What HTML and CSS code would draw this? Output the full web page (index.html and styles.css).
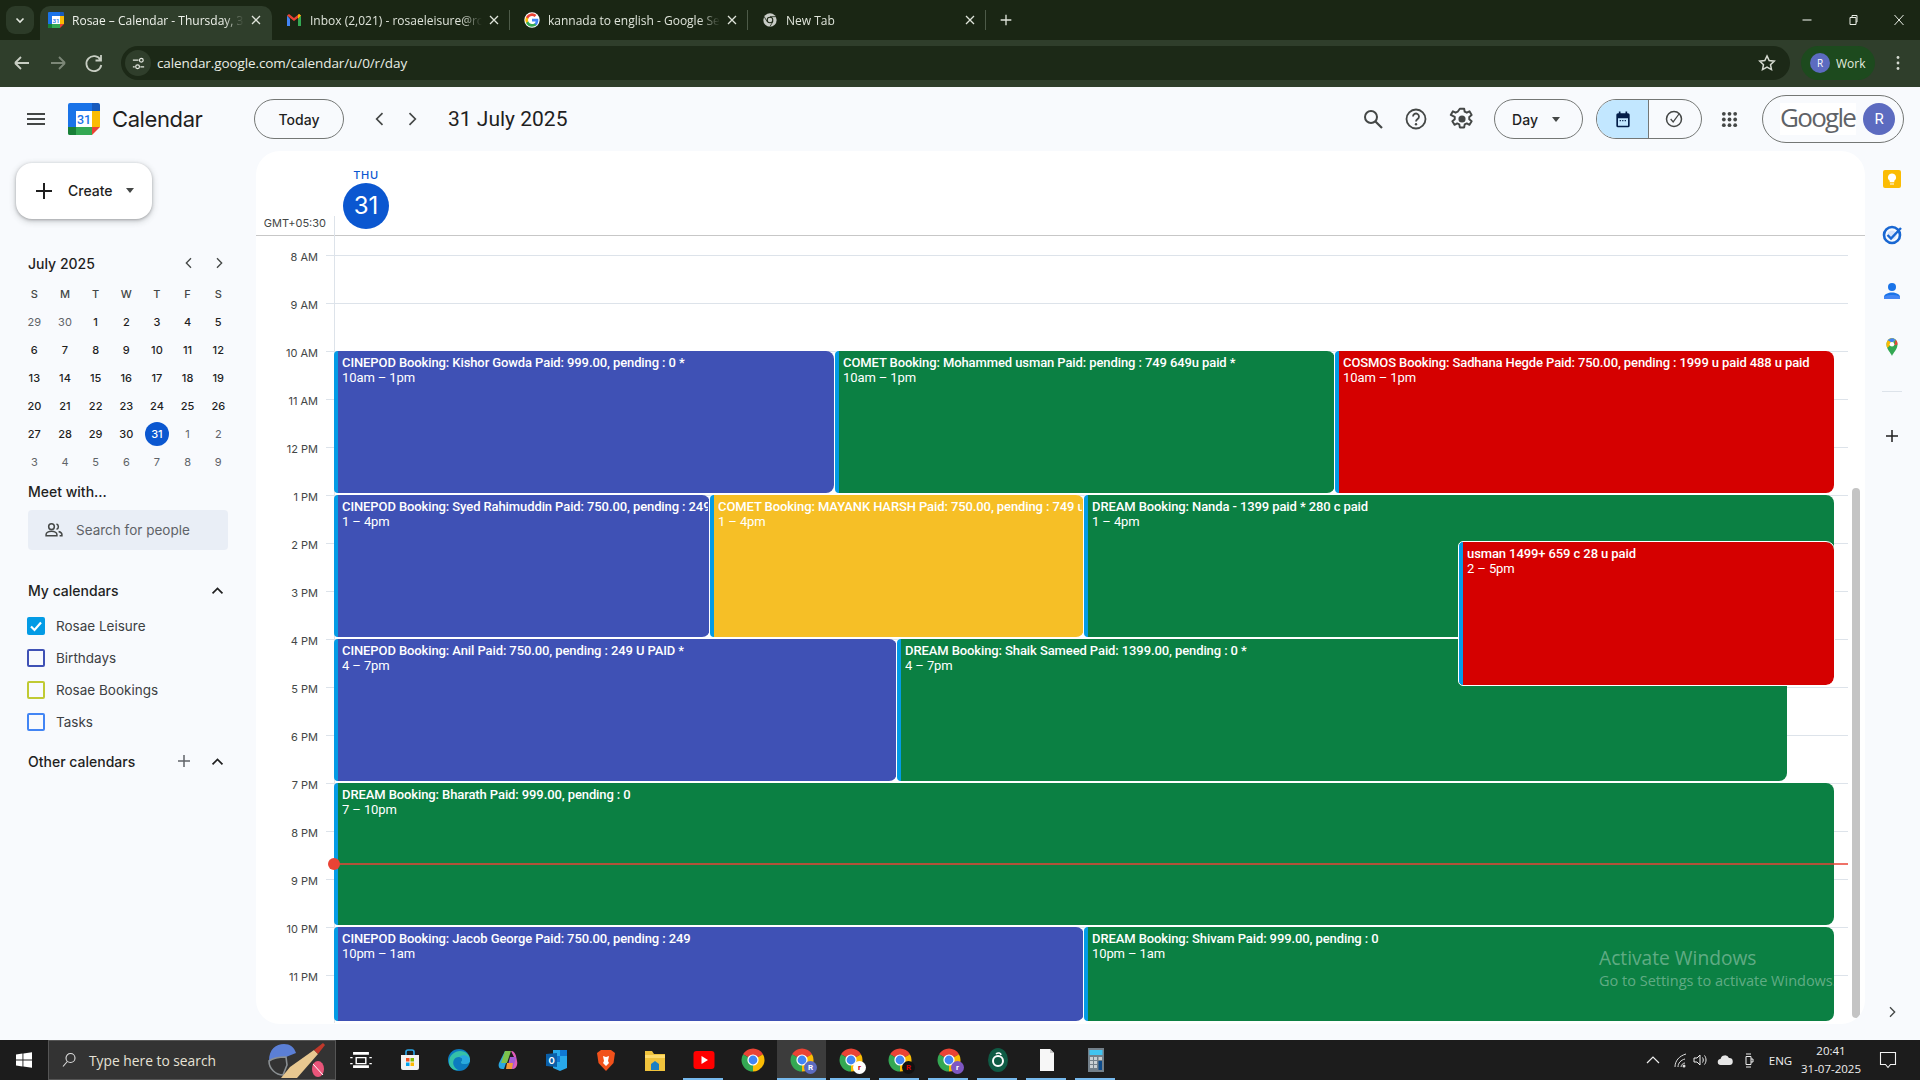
FILE: index.html
```html
<!DOCTYPE html>
<html lang="en">
<head>
<meta charset="utf-8">
<title>Rosae – Calendar</title>
<link rel="stylesheet" href="styles.css">
</head>
<body>
<svg class="defs" width="0" height="0" aria-hidden="true">
  <symbol id="chrome" viewBox="0 0 24 24">
    <circle cx="12" cy="12" r="8" fill="none" stroke="#ea4335" stroke-width="7" stroke-dasharray="16.76 33.52" transform="rotate(-150 12 12)"/>
    <circle cx="12" cy="12" r="8" fill="none" stroke="#fbbc04" stroke-width="7" stroke-dasharray="16.76 33.52" transform="rotate(-30 12 12)"/>
    <circle cx="12" cy="12" r="8" fill="none" stroke="#34a853" stroke-width="7" stroke-dasharray="16.76 33.52" transform="rotate(90 12 12)"/>
    <circle cx="12" cy="12" r="5.6" fill="#fff"/><circle cx="12" cy="12" r="4.4" fill="#4285f4"/>
  </symbol>
  <symbol id="gcal" viewBox="0 0 32 32">
    <path d="M2 0h22v8H8v16H0V2a2 2 0 0 1 2-2z" fill="#1a73e8"/>
    <path d="M24 0h6a2 2 0 0 1 2 2v6h-8z" fill="#185abc"/>
    <path d="M24 8h8v16h-8z" fill="#fbbc04"/>
    <path d="M0 24h24v8H2a2 2 0 0 1-2-2z" fill="#34a853"/>
    <path d="M0 24h8v8H2a2 2 0 0 1-2-2z" fill="#188038"/>
    <path d="M24 24h8l-8 8z" fill="#ea4335"/>
    <path d="M8 8h16v16H8z" fill="#fff"/>
    <text x="16" y="21" text-anchor="middle" font-family="Roboto, sans-serif" font-size="12.5" font-weight="500" fill="#1a73e8">31</text>
  </symbol>
  <symbol id="back" viewBox="0 0 24 24"><path d="M5 12h14M5 12l6-6M5 12l6 6" fill="none" stroke="#c8cec3" stroke-width="1.800"/></symbol>
  <symbol id="chev-l" viewBox="0 0 24 24"><path d="M15 5l-7 7 7 7" fill="none" stroke="currentColor" stroke-width="2"/></symbol>
  <symbol id="chev-r" viewBox="0 0 24 24"><path d="M9 5l7 7-7 7" fill="none" stroke="currentColor" stroke-width="2"/></symbol>
  <symbol id="chev-u" viewBox="0 0 24 24"><path d="M5 16l7-7 7 7" fill="none" stroke="currentColor" stroke-width="2.4"/></symbol>
  <symbol id="plus" viewBox="0 0 24 24"><path d="M12 4v16M4 12h16" fill="none" stroke="currentColor" stroke-width="2"/></symbol>
  <symbol id="x" viewBox="0 0 12 12"><path d="M2 2l8 8M10 2l-8 8" fill="none" stroke="currentColor" stroke-width="1.3"/></symbol>
</svg>

<header class="tabstrip">
  <div class="tab-search"><svg class="i10" viewBox="0 0 12 12"><path d="M2.5 4.5L6 8l3.5-3.5" fill="none" stroke="#e3e8df" stroke-width="1.6"/></svg></div>
  <div class="tab tab-active">
    <svg class="favicon"><use href="#gcal"/></svg><span class="tab-title">Rosae – Calendar - Thursday, 31 July 2025</span><svg class="tab-x"><use href="#x"/></svg>
  </div>
  <div class="tab">
    <svg class="favicon" viewBox="0 0 16 16"><path d="M1 3.5V14h3V7z" fill="#4285f4"/><path d="M15 3.5V14h-3V7z" fill="#34a853"/><path d="M1 3.5L8 9l7-5.5L13 2 8 6 3 2z" fill="#ea4335"/><path d="M12 7l3-3.500L13 2l-1 1z" fill="#fbbc04"/></svg><span class="tab-title">Inbox (2,021) - rosaeleisure@rosae.com</span><svg class="tab-x"><use href="#x"/></svg>
  </div>
  <i class="tab-sep"></i>
  <div class="tab">
    <svg class="favicon" viewBox="0 0 48 48"><circle cx="24" cy="24" r="23" fill="#fff"/><path d="M43 24.500c0-1.400-.1-2.700-.4-4H24v7.800h10.900a9.300 9.300 0 0 1-4 6.100v5h6.500c3.500-3.400 5.600-8.500 5.600-14.900z" fill="#4285f4"/><path d="M24 44c5.400 0 10-1.800 13.400-4.800l-6.500-5c-1.800 1.200-4.100 1.900-6.900 1.900-5.300 0-9.800-3.600-11.400-8.400H6v5.200A20 20 0 0 0 24 44z" fill="#34a853"/><path d="M12.600 27.700a12 12 0 0 1 0-7.400v-5.200H6a20 20 0 0 0 0 17.800z" fill="#fbbc04"/><path d="M24 11.900c3 0 5.600 1 7.700 3l5.800-5.800A20 20 0 0 0 6 15.100l6.600 5.200c1.600-4.800 6.100-8.400 11.400-8.400z" fill="#ea4335"/></svg><span class="tab-title">kannada to english - Google Search</span><svg class="tab-x"><use href="#x"/></svg>
  </div>
  <i class="tab-sep"></i>
  <div class="tab">
    <svg class="favicon" viewBox="0 0 24 24"><circle cx="12" cy="12" r="10" fill="#c8ccc6"/><circle cx="12" cy="12" r="5" fill="#1a2614"/><circle cx="12" cy="12" r="3.400" fill="#c8ccc6"/><path d="M12 7h9M7.700 14.500L3.300 7M16.300 14.500L11.800 22" stroke="#1a2614" stroke-width="1.200"/></svg><span class="tab-title">New Tab</span><svg class="tab-x"><use href="#x"/></svg>
  </div>
  <i class="tab-sep"></i>
  <svg class="new-tab"><use href="#plus"/></svg>
  <div class="win-controls">
    <svg viewBox="0 0 12 12"><path d="M1.500 6h9" stroke="#e8ece4" stroke-width="1.100"/></svg>
    <svg viewBox="0 0 12 12"><path d="M3 3.500h6v7H3zM5 3.500V1.500h5v6.500H9" fill="none" stroke="#e8ece4"/></svg>
    <svg viewBox="0 0 12 12"><path d="M1.500 1l9 10M10.500 1l-9 10" stroke="#e8ece4" stroke-width="1"/></svg>
  </div>
</header>

<nav class="toolbar">
  <svg class="tb-icon"><use href="#back"/></svg>
  <svg class="tb-icon" viewBox="0 0 24 24"><path d="M19 12H5M19 12l-6-6M19 12l-6 6" fill="none" stroke="#7c8777" stroke-width="1.800"/></svg>
  <svg class="tb-icon" viewBox="0 0 24 24"><path d="M18.500 9a7.500 7.500 0 1 0 .8 5M19 4v5.500h-5.500" fill="none" stroke="#c8cec3" stroke-width="1.800"/></svg>
  <div class="omnibox">
    <span class="tune"><svg viewBox="0 0 16 16"><path d="M2 4.500h6M2 11.500h2M10 11.500h4" stroke="#e5e9e1" stroke-width="1.300"/><circle cx="11" cy="4.500" r="2" fill="none" stroke="#e5e9e1" stroke-width="1.300"/><circle cx="7" cy="11.500" r="2" fill="none" stroke="#e5e9e1" stroke-width="1.300"/></svg></span>
    <span class="url">calendar.google.com/calendar/u/0/r/day</span>
    <svg class="star" viewBox="0 0 24 24"><path d="M12 3.500l2.600 5.600 6.100.7-4.500 4.200 1.200 6L12 17l-5.400 3 1.200-6-4.500-4.200 6.100-.7z" fill="none" stroke="#d5dad0" stroke-width="1.800"/></svg>
  </div>
  <div class="profile"><span class="profile-av">R</span><span>Work</span></div>
  <svg class="kebab" viewBox="0 0 4 16"><circle cx="2" cy="2.500" r="1.400" fill="#d5dad0"/><circle cx="2" cy="8" r="1.400" fill="#d5dad0"/><circle cx="2" cy="13.500" r="1.400" fill="#d5dad0"/></svg>
</nav>

<div class="app">
  <div class="topbar">
    <div class="brand">
      <svg class="burger" viewBox="0 0 18 12"><path d="M0 1h18M0 6h18M0 11h18" stroke="#444746" stroke-width="2"/></svg>
      <svg class="logo"><use href="#gcal"/></svg>
      <span class="brand-name">Calendar</span>
    </div>
    <button class="pill today">Today</button>
    <svg class="nav-chev"><use href="#chev-l"/></svg>
    <svg class="nav-chev"><use href="#chev-r"/></svg>
    <h1 class="date-title">31 July 2025</h1>
    <div class="top-right">
      <svg class="top-icon" viewBox="0 0 24 24"><circle cx="10" cy="10" r="6" fill="none" stroke="#444746" stroke-width="2"/><path d="M14.500 14.500L21 21" stroke="#444746" stroke-width="2.200"/></svg>
      <svg class="top-icon ti-help" viewBox="0 0 24 24"><circle cx="12" cy="12" r="9.500" fill="none" stroke="#444746" stroke-width="1.800"/><path d="M9 9.500a3 3 0 1 1 4.500 2.600c-1 .6-1.500 1.100-1.500 2.400" fill="none" stroke="#444746" stroke-width="1.800"/><circle cx="12" cy="17.300" r="1.200" fill="#444746"/></svg>
      <svg class="top-icon ti-gear" viewBox="0 0 24 24"><path d="M10 2.500h4l.5 2.800 1.900.9 2.500-1.300 2 3.400-2.200 1.800v2.100l2.200 1.800-2 3.400-2.500-1.300-1.900.9-.5 2.800h-4l-.5-2.800-1.900-.9-2.500 1.300-2-3.400 2.200-1.800v-2.100L1.600 8.300l2-3.400 2.500 1.300 1.900-.9z" fill="none" stroke="#444746" stroke-width="1.800" stroke-linejoin="round"/><circle cx="12" cy="12" r="3.300" fill="#444746"/></svg>
      <button class="pill day-btn">Day<i class="caret"></i></button>
      <div class="toggle">
        <span class="toggle-on"><svg viewBox="0 0 24 24"><path d="M6 6h12a1 1 0 0 1 1 1v13a1 1 0 0 1-1 1H6a1 1 0 0 1-1-1V7a1 1 0 0 1 1-1z" fill="none" stroke="#041e49" stroke-width="2"/><path d="M5 6h14v5H5z" fill="#041e49"/><path d="M8 3v3M16 3v3" stroke="#041e49" stroke-width="2"/><path d="M8 14h8" stroke="#041e49" stroke-width="1.500" stroke-dasharray="1.500 1.500"/></svg></span>
        <span class="toggle-off"><svg viewBox="0 0 24 24"><circle cx="12" cy="12" r="9" fill="none" stroke="#444746" stroke-width="1.800"/><path d="M8 12l3 3.500 7-9.500" fill="none" stroke="#444746" stroke-width="1.500"/></svg></span>
      </div>
      <svg class="apps" viewBox="0 0 18 18"><g fill="#444746"><circle cx="3" cy="3" r="2"/><circle cx="9" cy="3" r="2"/><circle cx="15" cy="3" r="2"/><circle cx="3" cy="9" r="2"/><circle cx="9" cy="9" r="2"/><circle cx="15" cy="9" r="2"/><circle cx="3" cy="15" r="2"/><circle cx="9" cy="15" r="2"/><circle cx="15" cy="15" r="2"/></g></svg>
      <div class="account"><span class="wordmark">Google</span><span class="account-av">R</span></div>
    </div>
  </div>

  <div class="main">
    <aside class="sidebar">
      <button class="create"><svg class="create-plus"><use href="#plus"/></svg><span>Create</span><i class="caret"></i></button>
      <div class="mini-head"><span>July 2025</span><svg class="mini-chev"><use href="#chev-l"/></svg><svg class="mini-chev"><use href="#chev-r"/></svg></div>
      <div class="mini-grid">
        <b>S</b><b>M</b><b>T</b><b>W</b><b>T</b><b>F</b><b>S</b>
        <span class="dim">29</span><span class="dim">30</span><span>1</span><span>2</span><span>3</span><span>4</span><span>5</span>
        <span>6</span><span>7</span><span>8</span><span>9</span><span>10</span><span>11</span><span>12</span>
        <span>13</span><span>14</span><span>15</span><span>16</span><span>17</span><span>18</span><span>19</span>
        <span>20</span><span>21</span><span>22</span><span>23</span><span>24</span><span>25</span><span>26</span>
        <span>27</span><span>28</span><span>29</span><span>30</span><span class="now">31</span><span class="dim">1</span><span class="dim">2</span>
        <span class="dim">3</span><span class="dim">4</span><span class="dim">5</span><span class="dim">6</span><span class="dim">7</span><span class="dim">8</span><span class="dim">9</span>
      </div>
      <h2 class="meet">Meet with...</h2>
      <div class="people">
        <svg viewBox="0 0 24 24"><circle cx="9" cy="8" r="3.400" fill="none" stroke="#444746" stroke-width="1.800"/><path d="M2.500 19v-1.500c0-2.500 3.500-4 6.500-4s6.500 1.500 6.500 4V19z" fill="none" stroke="#444746" stroke-width="1.800"/><path d="M15 4.800a3.400 3.400 0 0 1 0 6.400M17.500 13.800c2.300.6 4 1.900 4 3.700V19h-2.800" fill="none" stroke="#444746" stroke-width="1.800"/></svg>
        <span>Search for people</span>
      </div>
      <div class="section-head sh-my"><span>My calendars</span><svg class="sec-chev"><use href="#chev-u"/></svg></div>
      <ul class="cal-list">
        <li><i class="check check-on"><svg viewBox="0 0 18 18"><path d="M4 9.500l3.500 3.500L14 5.500" fill="none" stroke="#fff" stroke-width="2.200"/></svg></i>Rosae Leisure</li>
        <li><i class="check c-indigo"></i>Birthdays</li>
        <li><i class="check c-olive"></i>Rosae Bookings</li>
        <li><i class="check c-blue"></i>Tasks</li>
      </ul>
      <div class="section-head sh-other"><span>Other calendars</span><svg class="sec-plus"><use href="#plus"/></svg><svg class="sec-chev"><use href="#chev-u"/></svg></div>
    </aside>

    <section class="panel">
      <div class="day-head">
        <div class="gmt">GMT+05:30</div>
        <div class="day-cell"><span class="dow">THU</span><span class="dom">31</span></div>
      </div>
      <div class="grid">
        <div class="hour"><span>8 AM</span><i></i></div>
        <div class="hour"><span>9 AM</span><i></i></div>
        <div class="hour"><span>10 AM</span><i></i></div>
        <div class="hour"><span>11 AM</span><i></i></div>
        <div class="hour"><span>12 PM</span><i></i></div>
        <div class="hour"><span>1 PM</span><i></i></div>
        <div class="hour"><span>2 PM</span><i></i></div>
        <div class="hour"><span>3 PM</span><i></i></div>
        <div class="hour"><span>4 PM</span><i></i></div>
        <div class="hour"><span>5 PM</span><i></i></div>
        <div class="hour"><span>6 PM</span><i></i></div>
        <div class="hour"><span>7 PM</span><i></i></div>
        <div class="hour"><span>8 PM</span><i></i></div>
        <div class="hour"><span>9 PM</span><i></i></div>
        <div class="hour"><span>10 PM</span><i></i></div>
        <div class="hour"><span>11 PM</span><i></i></div>
        <div class="events">
          <article class="ev blue" style="left:0;top:96px;width:500px;height:142px"><b>CINEPOD Booking: Kishor Gowda Paid: 999.00, pending : 0 *</b><span>10am – 1pm</span></article>
          <article class="ev green edge" style="left:501px;top:96px;width:500px;height:142px"><b>COMET Booking: Mohammed usman Paid: pending : 749 649u paid *</b><span>10am – 1pm</span></article>
          <article class="ev red edge" style="left:1001px;top:96px;width:499px;height:142px"><b>COSMOS Booking: Sadhana Hegde Paid: 750.00, pending : 1999 u paid 488 u paid</b><span>10am – 1pm</span></article>
          <article class="ev blue" style="left:0;top:240px;width:376px;height:142px"><b>CINEPOD Booking: Syed Rahimuddin Paid: 750.00, pending : 249 U PAID *</b><span>1 – 4pm</span></article>
          <article class="ev yellow edge" style="left:376px;top:240px;width:374px;height:142px"><b>COMET Booking: MAYANK HARSH Paid: 750.00, pending : 749 u paid *</b><span>1 – 4pm</span></article>
          <article class="ev green edge" style="left:750px;top:240px;width:750px;height:142px"><b>DREAM Booking: Nanda - 1399 paid * 280 c paid</b><span>1 – 4pm</span></article>
          <article class="ev blue" style="left:0;top:384px;width:563px;height:142px"><b>CINEPOD Booking: Anil Paid: 750.00, pending : 249 U PAID *</b><span>4 – 7pm</span></article>
          <article class="ev green edge" style="left:563px;top:384px;width:890px;height:142px"><b>DREAM Booking: Shaik Sameed Paid: 1399.00, pending : 0 *</b><span>4 – 7pm</span></article>
          <article class="ev red ringed" style="left:1125px;top:287px;width:375px;height:143px"><b>usman 1499+ 659 c 28 u paid</b><span>2 – 5pm</span></article>
          <article class="ev green" style="left:0;top:528px;width:1500px;height:142px"><b>DREAM Booking: Bharath Paid: 999.00, pending : 0</b><span>7 – 10pm</span></article>
          <article class="ev blue" style="left:0;top:672px;width:750px;height:94px"><b>CINEPOD Booking: Jacob George Paid: 750.00, pending : 249</b><span>10pm – 1am</span></article>
          <article class="ev green edge" style="left:750px;top:672px;width:750px;height:94px"><b>DREAM Booking: Shivam Paid: 999.00, pending : 0</b><span>10pm – 1am</span></article>
          <div class="now-line"></div>
        </div>
      </div>
      <div class="scrollbar"></div>
      <div class="activate"><p>Activate Windows</p><small>Go to Settings to activate Windows.</small></div>
    </section>

    <aside class="rail">
      <svg viewBox="0 0 20 20"><rect x="1" y="1" width="18" height="18" rx="2" fill="#fbbc04"/><path d="M10 4.500a4 4 0 0 0-2.300 7.300v1.500h4.600v-1.500A4 4 0 0 0 10 4.500zM8 14.500h4v1H8z" fill="#fff"/></svg>
      <svg viewBox="0 0 20 20"><circle cx="10" cy="10" r="8" fill="none" stroke="#1967d2" stroke-width="2.600"/><circle cx="10" cy="10" r="4.600" fill="#8ab4f8" opacity=".3"/><path d="M5.500 10l3.500 3.500L19 3" fill="none" stroke="#1967d2" stroke-width="2.400"/></svg>
      <svg viewBox="0 0 20 20"><circle cx="10" cy="6" r="4" fill="#1a73e8"/><path d="M2 18v-2c0-3 4.500-4.500 8-4.500s8 1.500 8 4.500v2z" fill="#1a73e8"/><path d="M2 16c0-1 4-2 8-2s8 1 8 2v2H2z" fill="#4285f4"/></svg>
      <svg viewBox="0 0 20 20"><path d="M10 19c-1-3-5.500-6.500-5.500-11.500C4.500 4 7 1 10 1s5.500 3 5.500 6.500C15.500 12.500 11 16 10 19z" fill="#34a853"/><path d="M4.500 7.500C4.500 4 7 1 10 1l3.900 1.700L5.300 11a8 8 0 0 1-.8-3.500z" fill="#fbbc04"/><path d="M5.500 3L10 1l3.900 1.700-3.900 3z" fill="#4285f4"/><path d="M13.900 2.700a6 6 0 0 1 1.600 4.800l-3.300 1z" fill="#ea4335"/><circle cx="10" cy="7.300" r="2.300" fill="#fff"/></svg>
      <i class="rail-sep"></i>
      <svg class="rail-plus"><use href="#plus"/></svg>
      <svg class="rail-next"><use href="#chev-r"/></svg>
    </aside>
  </div>
</div>

<footer class="taskbar">
  <svg class="start" viewBox="0 0 18 18"><path d="M0 2.800L7.300 1.800V8.500H0zM8.300 1.600L18 .2V8.500H8.300zM0 9.500h7.300v6.700L0 15.200zM8.300 9.500H18v8.300l-9.700-1.400z" fill="#fff"/></svg>
  <div class="search">
    <svg viewBox="0 0 16 16"><circle cx="9.500" cy="6" r="4.500" fill="none" stroke="#ddd" stroke-width="1.100"/><path d="M6.300 9.500L2 14.500" stroke="#ddd" stroke-width="1.100"/></svg>
    <span>Type here to search</span>
    <svg class="doodle" viewBox="0 0 64 36"><path d="M3 18C3 6 10 1 18 1c6 0 10 3 12 9L20 14c-6 0-12 1-17 4z" fill="#5b7fd6"/><path d="M3 18c4-3 10-4 17-4l1 8-4 10c-7 0-14-6-14-14z" fill="none" stroke="#8a8f92" stroke-width="1.600"/><path d="M15 35l9-11L48 7l4 4-21 24z" fill="#e8c890"/><path d="M48 7l9-7 2 2-7 9z" fill="#c0392b"/><ellipse cx="52" cy="26" rx="6" ry="8" fill="#e9557a"/><path d="M47 21l10 11" stroke="#fff" stroke-width="1"/></svg>
  </div>
  <div class="apps-row">
    <span class="app-i"><svg viewBox="0 0 20 20"><path d="M4 4h12v1H4zM6 8h8v5H6zM4 15h12v1H4z" fill="none" stroke="#fff" stroke-width="1.200"/><path d="M1 8h2M1 13h2M17 8h2M17 13h2" stroke="#fff"/></svg></span>
    <span class="app-i"><svg viewBox="0 0 24 24"><path d="M3 7h18v13a2 2 0 0 1-2 2H5a2 2 0 0 1-2-2z" fill="#f3f3f3"/><path d="M8 7V4a2 2 0 0 1 2-2h4a2 2 0 0 1 2 2v3" fill="none" stroke="#2aa6e8" stroke-width="1.600"/><path d="M8 10h3.500v3.500H8z" fill="#f25022"/><path d="M12.500 10H16v3.500h-3.500z" fill="#7fba00"/><path d="M8 14.500h3.500V18H8z" fill="#00a4ef"/><path d="M12.500 14.500H16V18h-3.500z" fill="#ffb900"/></svg></span>
    <span class="app-i"><svg viewBox="0 0 24 24"><circle cx="12" cy="12" r="11" fill="#0c7bbf"/><path d="M2 14C2 7 8 3 13 3c6 0 10 4 10 9 0 3-3 4-6 4-2 0-3-1-3-2 2-1 2-5-2-5-5 0-7 5-5 9 1 2 3 4 5 4-6 1-10-3-10-8z" fill="#35c1a8"/><path d="M23 12c0 3-3 4-6 4-2 0-3-1-3-2 2-1 2-5-2-5 5-4 11 0 11 3z" fill="#29a8e0"/></svg></span>
    <span class="app-i"><svg viewBox="0 0 24 24"><path d="M9 3h5l-3 9-3 9H6c-3 0-4-3-3-6z" fill="#29a7e0"/><path d="M15 3c3 0 4 2 5 5l1 5c1 4-1 8-4 8h-3l4-12z" fill="#e25cb8"/><path d="M9 3h6l-4 12H5z" fill="#7dc24b"/><path d="M14 9h6l-3 12h-6z" fill="#a45bd6"/><path d="M11 15h6l-1 6h-6z" fill="#f59a3a"/></svg></span>
    <span class="app-i"><svg viewBox="0 0 24 24"><path d="M8 2h14v18l-7 3-7-3z" fill="#28a8ea"/><path d="M15 2h7v6h-7zM8 8h7v6H8z" fill="#0f78d4"/><path d="M1 6l11-1v14L1 18z" fill="#0a5fa8"/><text x="6.500" y="15.500" text-anchor="middle" font-family="Roboto, sans-serif" font-size="9" font-weight="700" fill="#fff">O</text></svg></span>
    <span class="app-i"><svg viewBox="0 0 24 24"><path d="M7 2h10l4 3-1.500 10L12 23 4.500 15 3 5z" fill="#f1511b"/><path d="M9 8l3 1 3-1-1 5 1 2-3 3-3-3 1-2z" fill="#fff"/></svg></span>
    <span class="app-i"><svg viewBox="0 0 24 24"><path d="M2 3h7l2 3h11v17H2z" fill="#f0c33c"/><path d="M2 7h20v3H2z" fill="#ffdc6b"/><path d="M8 22v-6l4-3 4 3v6z" fill="#1a7fc4"/></svg></span>
    <span class="app-i ul"><svg viewBox="0 0 24 24"><rect x="1.500" y="3" width="21" height="18" rx="3" fill="#f00"/><path d="M9.500 8l6.500 4-6.500 4z" fill="#fff"/></svg></span>
    <span class="app-i"><svg><use href="#chrome"/></svg></span>
    <span class="app-i ul hl"><svg><use href="#chrome"/></svg><em class="badge b-r">R</em></span>
    <span class="app-i ul"><svg><use href="#chrome"/></svg><em class="badge b-w">r</em></span>
    <span class="app-i ul"><svg><use href="#chrome"/></svg><em class="badge b-k">R</em></span>
    <span class="app-i ul"><svg><use href="#chrome"/></svg><em class="badge b-p">r</em></span>
    <span class="app-i ul"><svg viewBox="0 0 24 24"><ellipse cx="12" cy="12" rx="10" ry="12" fill="#0f5b45"/><circle cx="12" cy="13" r="5" fill="none" stroke="#fff" stroke-width="2"/><path d="M10 6c2-2 5-1 5 1" fill="none" stroke="#fff" stroke-width="1.500"/></svg></span>
    <span class="app-i ul"><svg viewBox="0 0 24 24"><path d="M5 1h10l4 4v18H5z" fill="#f7f7f7"/><path d="M15 1v4h4z" fill="#c9c9c9"/></svg></span>
    <span class="app-i ul"><svg viewBox="0 0 24 24"><rect x="4" y="0" width="16" height="24" fill="#73808a"/><rect x="5.500" y="2" width="13" height="5" fill="#41c4f0"/><path d="M6 9h3v3H6zM10 9h3v3h-3zM6 13h3v3H6zM10 13h3v3h-3zM6 17h3v3H6zM10 17h3v3h-3z" fill="#c9d0d4"/><rect x="14.500" y="13" width="3.500" height="9" fill="#0d4c8c"/><rect x="14.500" y="9" width="3.500" height="3" fill="#c9d0d4"/></svg></span>
  </div>
  <div class="tray">
    <svg class="t-chev" viewBox="0 0 16 16"><path d="M2 11l6-6 6 6" fill="none" stroke="#eee" stroke-width="1.200"/></svg>
    <svg class="t-wifi" viewBox="0 0 16 16"><path d="M3 15C3 9 7 4 14 2M6 15c0-4 3-7 7-8M9 15c0-2 2-4 4-4" fill="none" stroke="#ddd"/><circle cx="12" cy="14" r="1.500" fill="#ddd"/></svg>
    <svg viewBox="0 0 16 16"><path d="M1 6h3l3-3v10l-3-3H1z" fill="none" stroke="#eee"/><path d="M9.500 5.500c1 1.500 1 3.500 0 5M11.500 3.500c2 2.500 2 6.500 0 9" fill="none" stroke="#eee"/></svg>
    <svg viewBox="0 0 16 16"><path d="M4 13a3 3 0 0 1-.5-6A4.500 4.500 0 0 1 12 6a3.500 3.500 0 0 1 .5 7z" fill="#e6e6e6"/></svg>
    <svg viewBox="0 0 16 16"><path d="M5 4.500h5v8H5zM5 2h5M5 15h5M10 7h2v3h-2" fill="none" stroke="#eee"/></svg>
    <span class="lang">ENG</span>
    <div class="clock"><span>20:41</span><span>31-07-2025</span></div>
    <svg class="notif" viewBox="0 0 18 18"><path d="M1.500 1.500h15v12h-5l-2.500 3-2.500-3h-5z" fill="none" stroke="#f2f2f2" stroke-width="1.100"/></svg>
  </div>
</footer>
</body>
</html>
```

FILE: styles.css
```css
* { box-sizing: border-box; }
html, body { margin: 0; padding: 0; height: 100%; }
body {
  width: 1920px; height: 1080px; overflow: hidden;
  display: flex; flex-direction: column;
  font-family: Roboto, "Liberation Sans", sans-serif;
  background: #f8fafd; color: #1f1f1f;
}
.defs { position: absolute; }
i, em { font-style: normal; display: block; }
button { font: inherit; background: none; cursor: pointer; }

/* browser tabs */
.tabstrip { height: 40px; flex: none; display: flex; align-items: flex-end; background: #1a2614; padding-left: 6px; color: #dfe4da; position: relative; }
.tab-search { width: 28px; height: 28px; margin: 0 6px 6px 0; border-radius: 9px; background: #2c3b28; display: flex; align-items: center; justify-content: center; }
.i10 { width: 12px; height: 12px; }
.tab { width: 235px; height: 34px; display: flex; align-items: center; padding: 0 10px 6px 11px; font: 12px "Open Sans", sans-serif; }
.tab-active { width: 232px; padding-left: 8px; background: #2f3e2b; border-radius: 10px 10px 0 0; color: #eef1ea; margin-right: 3px; }
.favicon { width: 16px; height: 16px; flex: none; margin-right: 8px; }
.tab-title { flex: 1; white-space: nowrap; overflow: hidden; -webkit-mask-image: linear-gradient(90deg, #000 88%, transparent); mask-image: linear-gradient(90deg, #000 88%, transparent); }
.tab-x { width: 12px; height: 12px; flex: none; margin-left: 6px; color: #dfe4da; }
.tab-sep { width: 1px; height: 20px; background: #4d5a48; margin: 0 3px 10px -1px; flex: none; }
.new-tab { width: 16px; height: 16px; margin: 0 0 12px 9px; color: #dfe4da; }
.win-controls { position: absolute; right: 15px; top: 14px; display: flex; gap: 34px; }
.win-controls svg { width: 12px; height: 12px; }

/* browser toolbar */
.toolbar { height: 47px; flex: none; display: flex; align-items: center; background: #2f3e2b; padding: 0 20px 1px 10px; }
.tb-icon { width: 24px; height: 24px; margin-right: 12px; flex: none; }
.omnibox { flex: 1; height: 34px; margin: 0 11px 0 3px; border-radius: 17px; background: #1c2917; display: flex; align-items: center; padding: 0 13px 0 4px; }
.tune { width: 26px; height: 26px; border-radius: 50%; background: #2f3e2b; display: flex; align-items: center; justify-content: center; }
.tune svg { width: 15px; height: 15px; }
.url { margin-left: 6px; font: 13.500px "Open Sans", sans-serif; color: #e9ede5; flex: 1; letter-spacing: -.1px; }
.star { width: 20px; height: 20px; }
.profile { width: 74px; height: 34px; border-radius: 17px; background: #1d4a1e; display: flex; align-items: center; gap: 6px; padding-left: 9px; font: 12px "Open Sans", sans-serif; color: #e3ecde; }
.profile-av { width: 20px; height: 20px; border-radius: 50%; background: #5c6bc0; font-size: 10px; color: #fff; display: flex; align-items: center; justify-content: center; }
.kebab { width: 4px; height: 16px; margin-left: 21px; }

/* app */
.app { flex: 1; display: flex; flex-direction: column; min-height: 0; }
.topbar { height: 64px; flex: none; display: flex; align-items: center; padding: 0 16px 0 27px; }
.brand { display: flex; align-items: center; width: 227px; }
.burger { width: 18px; height: 12px; margin-right: 23px; }
.logo { width: 32px; height: 32px; margin-right: 12px; }
.brand-name { font: 22px Inter, sans-serif; letter-spacing: -.4px; color: #1f1f1f; }
.pill { height: 40px; border: 1px solid #747775; border-radius: 20px; font: 500 14px Inter, sans-serif; color: #1f1f1f; padding: 0; }
.today { width: 90px; margin-right: 26px; }
.nav-chev { width: 20px; height: 20px; color: #444746; margin-right: 12px; }
.date-title { margin: 0 0 0 14px; font: 400 21px Roboto, sans-serif; color: #1f1f1f; white-space: nowrap; }
.top-right { margin-left: auto; display: flex; align-items: center; }
.top-icon { width: 24px; height: 24px; margin-right: 19px; }
.ti-help { margin-right: 21px; }
.ti-gear { width: 26px; height: 26px; margin-right: 19px; }
.day-btn { width: 89px; display: flex; align-items: center; justify-content: center; gap: 14px; margin-right: 13px; padding-right: 5px; }
.caret { width: 0; height: 0; border: 4.500px solid transparent; border-top: 5px solid #444746; border-bottom: 0; }
.toggle { width: 106px; height: 40px; display: flex; border: 1px solid #747775; border-radius: 20px; overflow: hidden; margin-right: 20px; }
.toggle-on { width: 52px; background: #c2e7ff; border-right: 1px solid #747775; display: flex; align-items: center; justify-content: center; }
.toggle-off { flex: 1; display: flex; align-items: center; justify-content: center; padding-right: 3px; }
.toggle svg { width: 20px; height: 20px; }
.apps { width: 17px; height: 17px; margin-right: 24px; margin-left: -1px; }
.account { width: 142px; height: 48px; border: 1px solid #747775; border-radius: 24px; display: flex; align-items: center; padding-left: 17px; gap: 7px; }
.wordmark { width: 76px; height: 32px; background: #fff; font: 26px/29px "Open Sans", sans-serif; letter-spacing: -1.700px; color: #5f6368; }
.account-av { width: 32px; height: 32px; border-radius: 50%; background: #5c6bc0; color: #fff; font-size: 15px; display: flex; align-items: center; justify-content: center; }

.main { flex: 1; display: flex; min-height: 0; padding-bottom: 16px; }

/* sidebar */
.sidebar { width: 256px; flex: none; padding-left: 28px; padding-right: 28px; }
.create { width: 136px; height: 56px; margin: 12px 0 0 -12px; border: 0; border-radius: 16px; background: #fff; box-shadow: 0 1px 3px rgba(60,64,67,.35), 0 2px 6px 1px rgba(60,64,67,.2); display: flex; align-items: center; padding: 0 0 1px 16px; font: 500 14px Inter, sans-serif; color: #1f1f1f; }
.create-plus { width: 24px; height: 24px; color: #1f1f1f; margin-right: 12px; }
.create .caret { margin-left: 13px; }
.mini-head { height: 20px; margin-top: 34px; display: flex; align-items: center; font: 500 14px Inter, sans-serif; color: #1f1f1f; }
.mini-head span { flex: 1; }
.mini-chev { width: 16px; height: 16px; color: #444746; }
.mini-chev:last-child { margin-left: 14px; margin-right: 1px; }
.mini-grid { display: grid; grid-template-columns: repeat(7, 30.670px); grid-auto-rows: 28px; margin: 7px 0 0 -9px; font: 500 11px/28px Inter, sans-serif; text-align: center; color: #1f1f1f; }
.mini-grid b { font-weight: 500; color: #444746; }
.mini-grid .dim { color: #5f6368; font-weight: 400; }
.mini-grid .now { width: 24px; height: 24px; margin: 2px auto 0; border-radius: 50%; background: #0b57d0; color: #fff; line-height: 24px; }
.meet { margin: 6px 0 0; height: 20px; font: 500 14px/20px Inter, sans-serif; color: #1f1f1f; }
.people { width: 200px; height: 40px; margin-top: 8px; border-radius: 4px; background: #e9eef6; display: flex; align-items: center; padding-left: 16px; font: 13.500px Inter, sans-serif; color: #5f6368; }
.people svg { width: 20px; height: 20px; margin-right: 12px; }
.section-head { height: 24px; display: flex; align-items: center; font: 500 14px Inter, sans-serif; color: #1f1f1f; width: 200px; }
.section-head span { flex: 1; }
.sh-my { margin-top: 28px; }
.sh-other { margin-top: 11px; }
.sec-chev { width: 17px; height: 17px; color: #1f1f1f; margin-right: 2px; }
.sec-plus { width: 18px; height: 18px; color: #5f6368; margin-right: 16px; }
.cal-list { list-style: none; margin: 8px 0 0 -1px; padding: 0; font: 13.500px Inter, sans-serif; color: #3c4043; }
.cal-list li { height: 32px; display: flex; align-items: center; }
.check { width: 18px; height: 18px; margin-right: 11px; border: 2px solid; border-radius: 2px; }
.check-on { background: #039be5; border: 0; }
.check-on svg { width: 18px; height: 18px; display: block; }
.c-indigo { border-color: #3f51b5; }
.c-olive { border-color: #c0ca33; }
.c-blue { border-color: #4285f4; }

/* panel */
.panel { flex: 1; background: #fff; border-radius: 24px; position: relative; overflow: hidden; }
.day-head { height: 85px; display: flex; border-bottom: 1px solid #c7c7c7; position: relative; }
.gmt { width: 70px; margin-top: 65px; font: 11px/14px Inter, sans-serif; color: #444746; text-align: right; white-space: nowrap; flex: none; }
.day-cell { width: 46px; margin-left: 17px; margin-top: 17px; display: flex; flex-direction: column; align-items: center; position: relative; }
.dow { font: 500 11px/14px Inter, sans-serif; color: #0b57d0; letter-spacing: .6px; height: 15px; }
.dom { width: 46px; height: 46px; border-radius: 50%; background: #0b57d0; color: #fff; font: 24px/46px Inter, sans-serif; text-align: center; flex: none; }
.grid { position: relative; padding-top: 19px; }
.grid::before { content: ""; position: absolute; left: 78px; top: -20px; bottom: 0; width: 1px; background: #dde3ea; }
.hour { height: 48px; display: flex; }
.hour span { width: 62px; margin-top: -5px; height: 14px; font: 11px/14px Inter, sans-serif; color: #444746; text-align: right; white-space: nowrap; }
.hour i { flex: 1; margin: 0 17px 0 8px; height: 1px; background: #dde3ea; }
.events { position: absolute; left: 78px; top: 19px; width: 1514px; height: 768px; }
.ev { position: absolute; display: flex; flex-direction: column; padding: 4px 2px 0 4px; border-radius: 4px 8px 8px 4px; overflow: hidden; border-left: 4px solid #039be5; color: #fff; font: 13px/15px Roboto, sans-serif; letter-spacing: -.1px; white-space: nowrap; }
.ev b { font-weight: 500; overflow: hidden; }
.ev span { overflow: hidden; }
.ev.edge { box-shadow: -1px 0 0 #fff; }
.ev.ringed { outline: 1px solid #fff; }
.blue { background: #3f51b5; }
.green { background: #0b8043; }
.red { background: #d50000; }
.yellow { background: #f6bf26; }
.now-line { position: absolute; left: 0; right: 0; top: 608px; height: 2px; background: rgba(234,67,53,.75); }
.now-line::before { content: ""; position: absolute; left: -6px; top: -5px; width: 12px; height: 12px; border-radius: 50%; background: #ea4335; }
.scrollbar { position: absolute; right: 5px; top: 337px; width: 8px; height: 530px; border-radius: 4px; background: #c4c4c4; }
.activate { position: absolute; left: 1343px; top: 794px; color: rgba(255,255,255,.36); white-space: nowrap; font-family: "Open Sans", sans-serif; }
.activate p { margin: 0; font-size: 19.200px; line-height: 26px; }
.activate small { display: block; font-size: 14.500px; line-height: 20px; }

/* right rail */
.rail { width: 55px; flex: none; display: flex; flex-direction: column; align-items: center; padding: 18px 1px 0 0; position: relative; }
.rail svg { width: 20px; height: 20px; margin-bottom: 36px; flex: none; }
.rail-sep { width: 20px; height: 1px; background: #dde3ea; margin-top: -2px; }
.rail .rail-plus { width: 18px; height: 18px; color: #1f1f1f; margin: 35px 0 0; }
.rail .rail-next { width: 16px; height: 16px; color: #444746; margin: 0; position: absolute; bottom: 4px; left: 19px; }

/* taskbar */
.taskbar { height: 40px; flex: none; background: #1c1c1c; display: flex; align-items: center; }
.start { width: 16px; height: 16px; margin: 0 16px; flex: none; }
.search { width: 288px; height: 40px; background: #333; border: 1px solid #555; display: flex; align-items: center; padding-left: 12px; font: 13.800px "Open Sans", sans-serif; color: #e6e2d6; position: relative; }
.search > svg:first-child { width: 16px; height: 16px; margin-right: 12px; }
.doodle { position: absolute; left: 215px; top: 2px; width: 68px; height: 36px; }
.apps-row { display: flex; }
.app-i { width: 49px; height: 40px; display: flex; align-items: center; justify-content: center; position: relative; }
.app-i svg { width: 24px; height: 24px; }
.app-i.ul::after { content: ""; position: absolute; left: 4px; right: 5px; bottom: 0; height: 2px; background: #76b9ed; }
.app-i.hl { background: #3c3c3c; }
.app-i.hl::after { left: 0; right: 0; }
.badge { position: absolute; left: 27px; top: 21px; width: 13px; height: 13px; border-radius: 50%; font: 700 8px/13px Roboto, sans-serif; text-align: center; }
.b-r { background: #5c6bc0; color: #fff; }
.b-w { background: #fff; color: #d50000; }
.b-k { background: #111; color: #d50000; }
.b-p { background: #7e57c2; color: #fff; }
.tray { margin-left: auto; display: flex; align-items: center; color: #eee; padding-right: 23px; }
.tray svg { width: 16px; height: 16px; margin-right: 8px; }
.tray .t-chev { margin-right: 11px; }
.tray .t-wifi { margin-right: 5px; }
.lang { font: 11.500px "Open Sans", sans-serif; margin-left: 1px; width: 29px; text-align: center; }
.clock { width: 72px; display: flex; flex-direction: column; align-items: center; font: 11.500px/18px "Open Sans", sans-serif; }
.tray .notif { width: 18px; height: 18px; margin: 0 0 0 12px; }
```
